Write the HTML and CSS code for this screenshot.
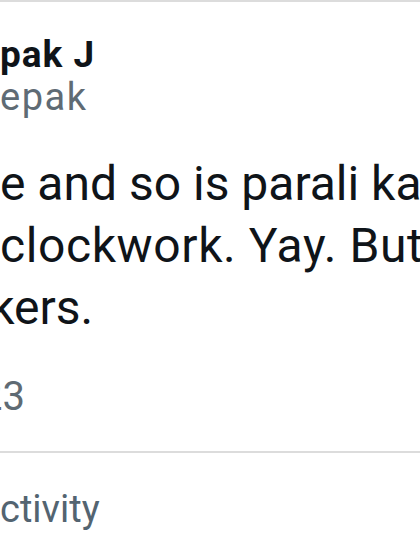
FILE: index.html
```html
<!DOCTYPE html>
<html lang="en">
<head>
<meta charset="utf-8">
<link rel="stylesheet" href="styles.css">
</head>
<body>
<div class="page">
  <header class="author">
    <div class="name">pak J</div>
    <div class="handle">epak</div>
  </header>
  <div class="tweet">
    <div class="line">e and so is parali ka</div>
    <div class="line line-2">clockwork. Yay. But</div>
    <div class="line line-3">ckers.</div>
  </div>
  <div class="meta">23</div>
  <div class="activity">ctivity</div>
</div>
</body>
</html>
```
FILE: styles.css
```css
html, body {
  margin: 0;
  padding: 0;
  background: #ffffff;
}
body {
  width: 420px;
  height: 560px;
  overflow: hidden;
  font-family: Roboto, "Noto Sans", sans-serif;
  color: #0f1419;
}
.page {
  border-top: 2px solid #dcdcdc;
  overflow: hidden;
  height: 558px;
}
.author {
  margin-top: 31px;
}
.name {
  font-size: 37px;
  line-height: 43px;
  font-weight: 700;
  letter-spacing: 1px;
  white-space: nowrap;
}
.handle {
  font-size: 38px;
  line-height: 43px;
  letter-spacing: 1.5px;
  color: #5f6b74;
  white-space: nowrap;
}
.tweet {
  margin-top: 34px;
}
.line {
  font-size: 48px;
  line-height: 62px;
  white-space: nowrap;
}
.line-2 {
  letter-spacing: 0.6px;
}
.line-3 {
  text-indent: -35px;
}
.meta {
  margin-top: 32px;
  font-size: 40px;
  line-height: 52px;
  color: #5f6b74;
  white-space: nowrap;
  text-indent: -20px;
}
.activity {
  margin-top: 28px;
  border-top: 2px solid #dcdcdc;
  padding-top: 30px;
  font-size: 38px;
  line-height: 52px;
  color: #536471;
  white-space: nowrap;
}
```
